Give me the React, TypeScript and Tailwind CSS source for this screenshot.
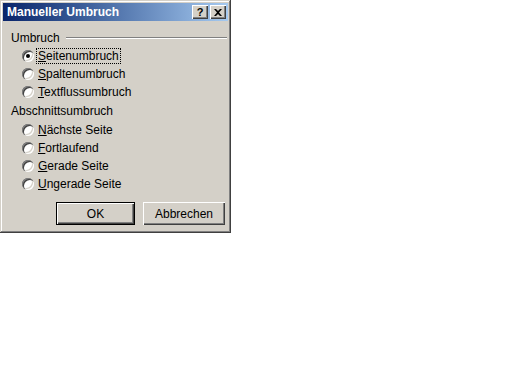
import React from 'react';

const font = { fontFamily: '"Liberation Sans", Arial, sans-serif' };

const Radio = ({ checked, u, rest, focus }: { checked?: boolean; u: string; rest: string; focus?: boolean }) => (
  <div className="flex items-center h-[18px] pl-[19px]">
    <span className="relative w-[12px] h-[12px] rounded-full bg-white shadow-[inset_1px_1px_#808080,inset_2px_2px_#404040,inset_-1px_-1px_#ffffff,inset_-2px_-2px_#d4d0c8] flex items-center justify-center">
      {checked && <span className="w-[4px] h-[4px] rounded-full bg-black" />}
    </span>
    <span className={`ml-[3px] px-[1px] leading-[14px] ${focus ? 'outline outline-1 outline-dotted outline-black' : ''}`}>
      <span className="underline underline-offset-1">{u}</span>
      {rest}
    </span>
  </div>
);

const Button = ({ children, w, isDefault }: { children: React.ReactNode; w: string; isDefault?: boolean }) => (
  <button
    className={`${w} h-[23px] bg-[#d4d0c8] text-black text-[12px] ${
      isDefault
        ? 'border border-black shadow-[inset_1px_1px_#ffffff,inset_-1px_-1px_#404040,inset_-2px_-2px_#808080]'
        : 'shadow-[inset_1px_1px_#ffffff,inset_-1px_-1px_#404040,inset_-2px_-2px_#808080]'
    }`}
  >
    {children}
  </button>
);

export default function App() {
  return (
    <div className="w-[512px] h-[384px] bg-white" style={font}>
      <div className="w-[231px] h-[233px] bg-[#d4d0c8] p-[3px] shadow-[inset_-1px_-1px_#404040,inset_1px_1px_#d4d0c8,inset_-2px_-2px_#808080,inset_2px_2px_#ffffff] flex flex-col text-[12px] text-black">
        <div className="h-[18px] bg-gradient-to-r from-[#0a246a] to-[#a6caf0] flex items-center pl-[4px] pr-[2px]">
          <span className="text-white font-bold text-[12px] flex-1">Manueller Umbruch</span>
          <span className="w-[16px] h-[14px] bg-[#d4d0c8] shadow-[inset_1px_1px_#ffffff,inset_-1px_-1px_#404040,inset_-2px_-2px_#808080] flex items-center justify-center font-bold text-[11px] leading-none">?</span>
          <span className="w-[16px] h-[14px] ml-[2px] bg-[#d4d0c8] shadow-[inset_1px_1px_#ffffff,inset_-1px_-1px_#404040,inset_-2px_-2px_#808080] flex items-center justify-center">
            <svg width="8" height="7" viewBox="0 0 8 7">
              <path d="M0 0h2l2 2 2-2h2L5 3.5 8 7H6L4 5 2 7H0l3-3.5z" fill="#000" />
            </svg>
          </span>
        </div>
        <div className="flex flex-col pt-[10px] pl-[8px] pr-[1px]">
          <div className="flex items-center h-[14px]">
            <span>Umbruch</span>
            <span className="flex-1 ml-[6px] h-[2px] border-t border-[#808080] border-b border-b-white" />
          </div>
          <div className="mt-[2px] -ml-[8px]">
            <Radio checked focus u="S" rest="eitenumbruch" />
            <Radio u="S" rest="paltenumbruch" />
            <Radio u="T" rest="extflussumbruch" />
          </div>
          <div className="h-[20px] flex items-center">Abschnittsumbruch</div>
          <div className="-ml-[8px]">
            <Radio u="N" rest="ächste Seite" />
            <Radio u="F" rest="ortlaufend" />
            <Radio u="G" rest="erade Seite" />
            <Radio u="U" rest="ngerade Seite" />
          </div>
          <div className="flex justify-end gap-[8px] mt-[9px] pr-[2px]">
            <Button w="w-[79px]" isDefault>OK</Button>
            <Button w="w-[82px]">Abbrechen</Button>
          </div>
        </div>
      </div>
    </div>
  );
}
